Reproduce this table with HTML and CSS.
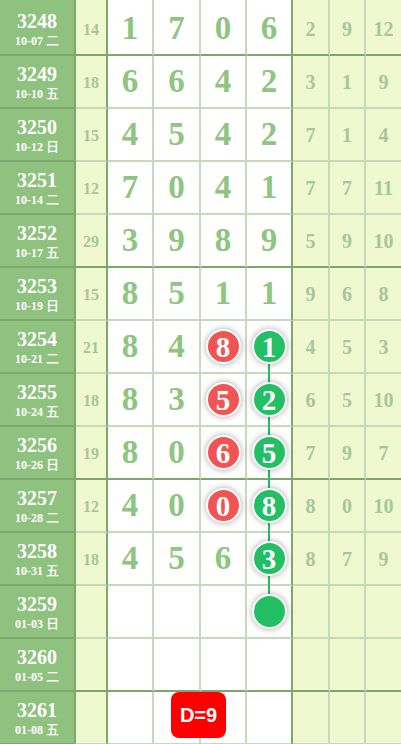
FILE: index.html
```html
<!DOCTYPE html>
<html lang="zh">
<head>
<meta charset="utf-8">
<title>走势图</title>
<link rel="stylesheet" href="styles.css">
</head>
<body>
<div class="chart">
  <div class="row cap">
    <div class="c c1"></div><div class="c c2"></div><div class="c w"></div><div class="c w"></div><div class="c w"></div><div class="c w wl"></div><div class="c y"></div><div class="c y"></div><div class="c y yl"></div>
  </div>

  <div class="row grp">
    <div class="c c1"><span class="no">3248</span><span class="dt">10-07 <i>二</i></span></div>
    <div class="c c2">14</div>
    <div class="c w">1</div><div class="c w">7</div><div class="c w">0</div><div class="c w wl">6</div>
    <div class="c y">2</div><div class="c y">9</div><div class="c y yl">12</div>
  </div>

  <div class="row">
    <div class="c c1"><span class="no">3249</span><span class="dt">10-10 <i>五</i></span></div>
    <div class="c c2">18</div>
    <div class="c w">6</div><div class="c w">6</div><div class="c w">4</div><div class="c w wl">2</div>
    <div class="c y">3</div><div class="c y">1</div><div class="c y yl">9</div>
  </div>

  <div class="row">
    <div class="c c1"><span class="no">3250</span><span class="dt">10-12 <i>日</i></span></div>
    <div class="c c2">15</div>
    <div class="c w">4</div><div class="c w">5</div><div class="c w">4</div><div class="c w wl">2</div>
    <div class="c y">7</div><div class="c y">1</div><div class="c y yl">4</div>
  </div>

  <div class="row">
    <div class="c c1"><span class="no">3251</span><span class="dt">10-14 <i>二</i></span></div>
    <div class="c c2">12</div>
    <div class="c w">7</div><div class="c w">0</div><div class="c w">4</div><div class="c w wl">1</div>
    <div class="c y">7</div><div class="c y">7</div><div class="c y yl">11</div>
  </div>

  <div class="row grp">
    <div class="c c1"><span class="no">3252</span><span class="dt">10-17 <i>五</i></span></div>
    <div class="c c2">29</div>
    <div class="c w">3</div><div class="c w">9</div><div class="c w">8</div><div class="c w wl">9</div>
    <div class="c y">5</div><div class="c y">9</div><div class="c y yl">10</div>
  </div>

  <div class="row">
    <div class="c c1"><span class="no">3253</span><span class="dt">10-19 <i>日</i></span></div>
    <div class="c c2">15</div>
    <div class="c w">8</div><div class="c w">5</div><div class="c w">1</div><div class="c w wl">1</div>
    <div class="c y">9</div><div class="c y">6</div><div class="c y yl">8</div>
  </div>

  <div class="row">
    <div class="c c1"><span class="no">3254</span><span class="dt">10-21 <i>二</i></span></div>
    <div class="c c2">21</div>
    <div class="c w">8</div><div class="c w">4</div>
    <div class="c w"><span class="ball red">8</span></div>
    <div class="c w wl link"><span class="ball grn">1</span></div>
    <div class="c y">4</div><div class="c y">5</div><div class="c y yl">3</div>
  </div>

  <div class="row">
    <div class="c c1"><span class="no">3255</span><span class="dt">10-24 <i>五</i></span></div>
    <div class="c c2">18</div>
    <div class="c w">8</div><div class="c w">3</div>
    <div class="c w"><span class="ball red">5</span></div>
    <div class="c w wl link"><span class="ball grn">2</span></div>
    <div class="c y">6</div><div class="c y">5</div><div class="c y yl">10</div>
  </div>

  <div class="row grp">
    <div class="c c1"><span class="no">3256</span><span class="dt">10-26 <i>日</i></span></div>
    <div class="c c2">19</div>
    <div class="c w">8</div><div class="c w">0</div>
    <div class="c w"><span class="ball red">6</span></div>
    <div class="c w wl link"><span class="ball grn">5</span></div>
    <div class="c y">7</div><div class="c y">9</div><div class="c y yl">7</div>
  </div>

  <div class="row">
    <div class="c c1"><span class="no">3257</span><span class="dt">10-28 <i>二</i></span></div>
    <div class="c c2">12</div>
    <div class="c w">4</div><div class="c w">0</div>
    <div class="c w"><span class="ball red">0</span></div>
    <div class="c w wl link"><span class="ball grn">8</span></div>
    <div class="c y">8</div><div class="c y">0</div><div class="c y yl">10</div>
  </div>

  <div class="row">
    <div class="c c1"><span class="no">3258</span><span class="dt">10-31 <i>五</i></span></div>
    <div class="c c2">18</div>
    <div class="c w">4</div><div class="c w">5</div><div class="c w">6</div>
    <div class="c w wl link"><span class="ball grn">3</span></div>
    <div class="c y">8</div><div class="c y">7</div><div class="c y yl">9</div>
  </div>

  <div class="row">
    <div class="c c1"><span class="no">3259</span><span class="dt">01-03 <i>日</i></span></div>
    <div class="c c2"></div>
    <div class="c w"></div><div class="c w"></div><div class="c w"></div>
    <div class="c w wl"><span class="ball grn"></span></div>
    <div class="c y"></div><div class="c y"></div><div class="c y yl"></div>
  </div>

  <div class="row grp">
    <div class="c c1"><span class="no">3260</span><span class="dt">01-05 <i>二</i></span></div>
    <div class="c c2"></div>
    <div class="c w"></div><div class="c w"></div><div class="c w"></div><div class="c w wl"></div>
    <div class="c y"></div><div class="c y"></div><div class="c y yl"></div>
  </div>

  <div class="row last">
    <div class="c c1"><span class="no">3261</span><span class="dt">01-08 <i>五</i></span></div>
    <div class="c c2"></div>
    <div class="c w"></div><div class="c w"></div><div class="c w"></div><div class="c w wl"></div>
    <div class="c y"></div><div class="c y"></div><div class="c y yl"></div>
    <div class="badge">D=9</div>
  </div>
</div>
</body>
</html>
```

FILE: styles.css
```css
html, body {
  margin: 0;
  padding: 0;
  background: #ffffff;
  overflow: hidden;
}

.chart {
  width: 401px;
  font-family: "Liberation Serif", "Times New Roman", serif;
  font-weight: bold;
}

.row {
  display: grid;
  grid-template-columns: 76px 32px 46px 47px 46px 46px 37px 36px 35px;
  height: 53px;
  position: relative;
}

.row.cap {
  height: 3px;
}

.c {
  box-sizing: border-box;
  border-right: 2px solid #c6d9bc;
  border-bottom: 2px solid #c6d9bc;
  display: flex;
  align-items: center;
  justify-content: center;
  position: relative;
}

.grp .c {
  border-bottom-color: #7ca86d;
}

.c1 {
  background: #8fc17f;
  border-right-color: #7ca86d;
  border-bottom-color: #7ca86d;
  flex-direction: column;
  color: #ffffff;
  padding-top: 4px;
}

.no {
  font-size: 20px;
  line-height: 20px;
}

.dt {
  font-size: 12px;
  line-height: 18px;
  white-space: nowrap;
}

.dt i {
  font-style: normal;
  font-family: "Noto Sans CJK SC", sans-serif;
  font-weight: 500;
  font-size: 13px;
}

.c2 {
  background: #f0f8cf;
  border-right-color: #7ca86d;
  color: #a9c59c;
  font-size: 16px;
  padding-top: 2px;
}

.w {
  background: #ffffff;
  color: #8ec580;
  font-size: 33px;
}

.wl {
  border-right-color: #7ca86d;
}

.y {
  background: #f0f8cf;
  color: #a7c79b;
  font-size: 20px;
  padding-top: 2px;
}

.yl {
  border-right: none;
}

.ball {
  box-sizing: border-box;
  width: 35px;
  height: 35px;
  border-radius: 50%;
  border: 2px solid #ffffff;
  box-shadow: 0 0 6px rgba(0, 0, 0, 0.35);
  color: #ffffff;
  font-size: 29px;
  line-height: 32px;
  text-align: center;
  position: relative;
  z-index: 2;
}

.red {
  background: #f05454;
}

.grn {
  background: #22bf64;
}

.link::after {
  content: "";
  position: absolute;
  left: 50%;
  top: 50%;
  width: 2px;
  margin-left: -1px;
  height: 54px;
  background: #22bf64;
  z-index: 1;
}

.badge {
  position: absolute;
  left: 171px;
  top: 0;
  width: 55px;
  height: 46px;
  border-radius: 8px;
  background: #ff0000;
  color: #ffffff;
  font-family: "Liberation Sans", Arial, sans-serif;
  font-weight: bold;
  font-size: 20px;
  display: flex;
  align-items: center;
  justify-content: center;
  z-index: 3;
}
```
